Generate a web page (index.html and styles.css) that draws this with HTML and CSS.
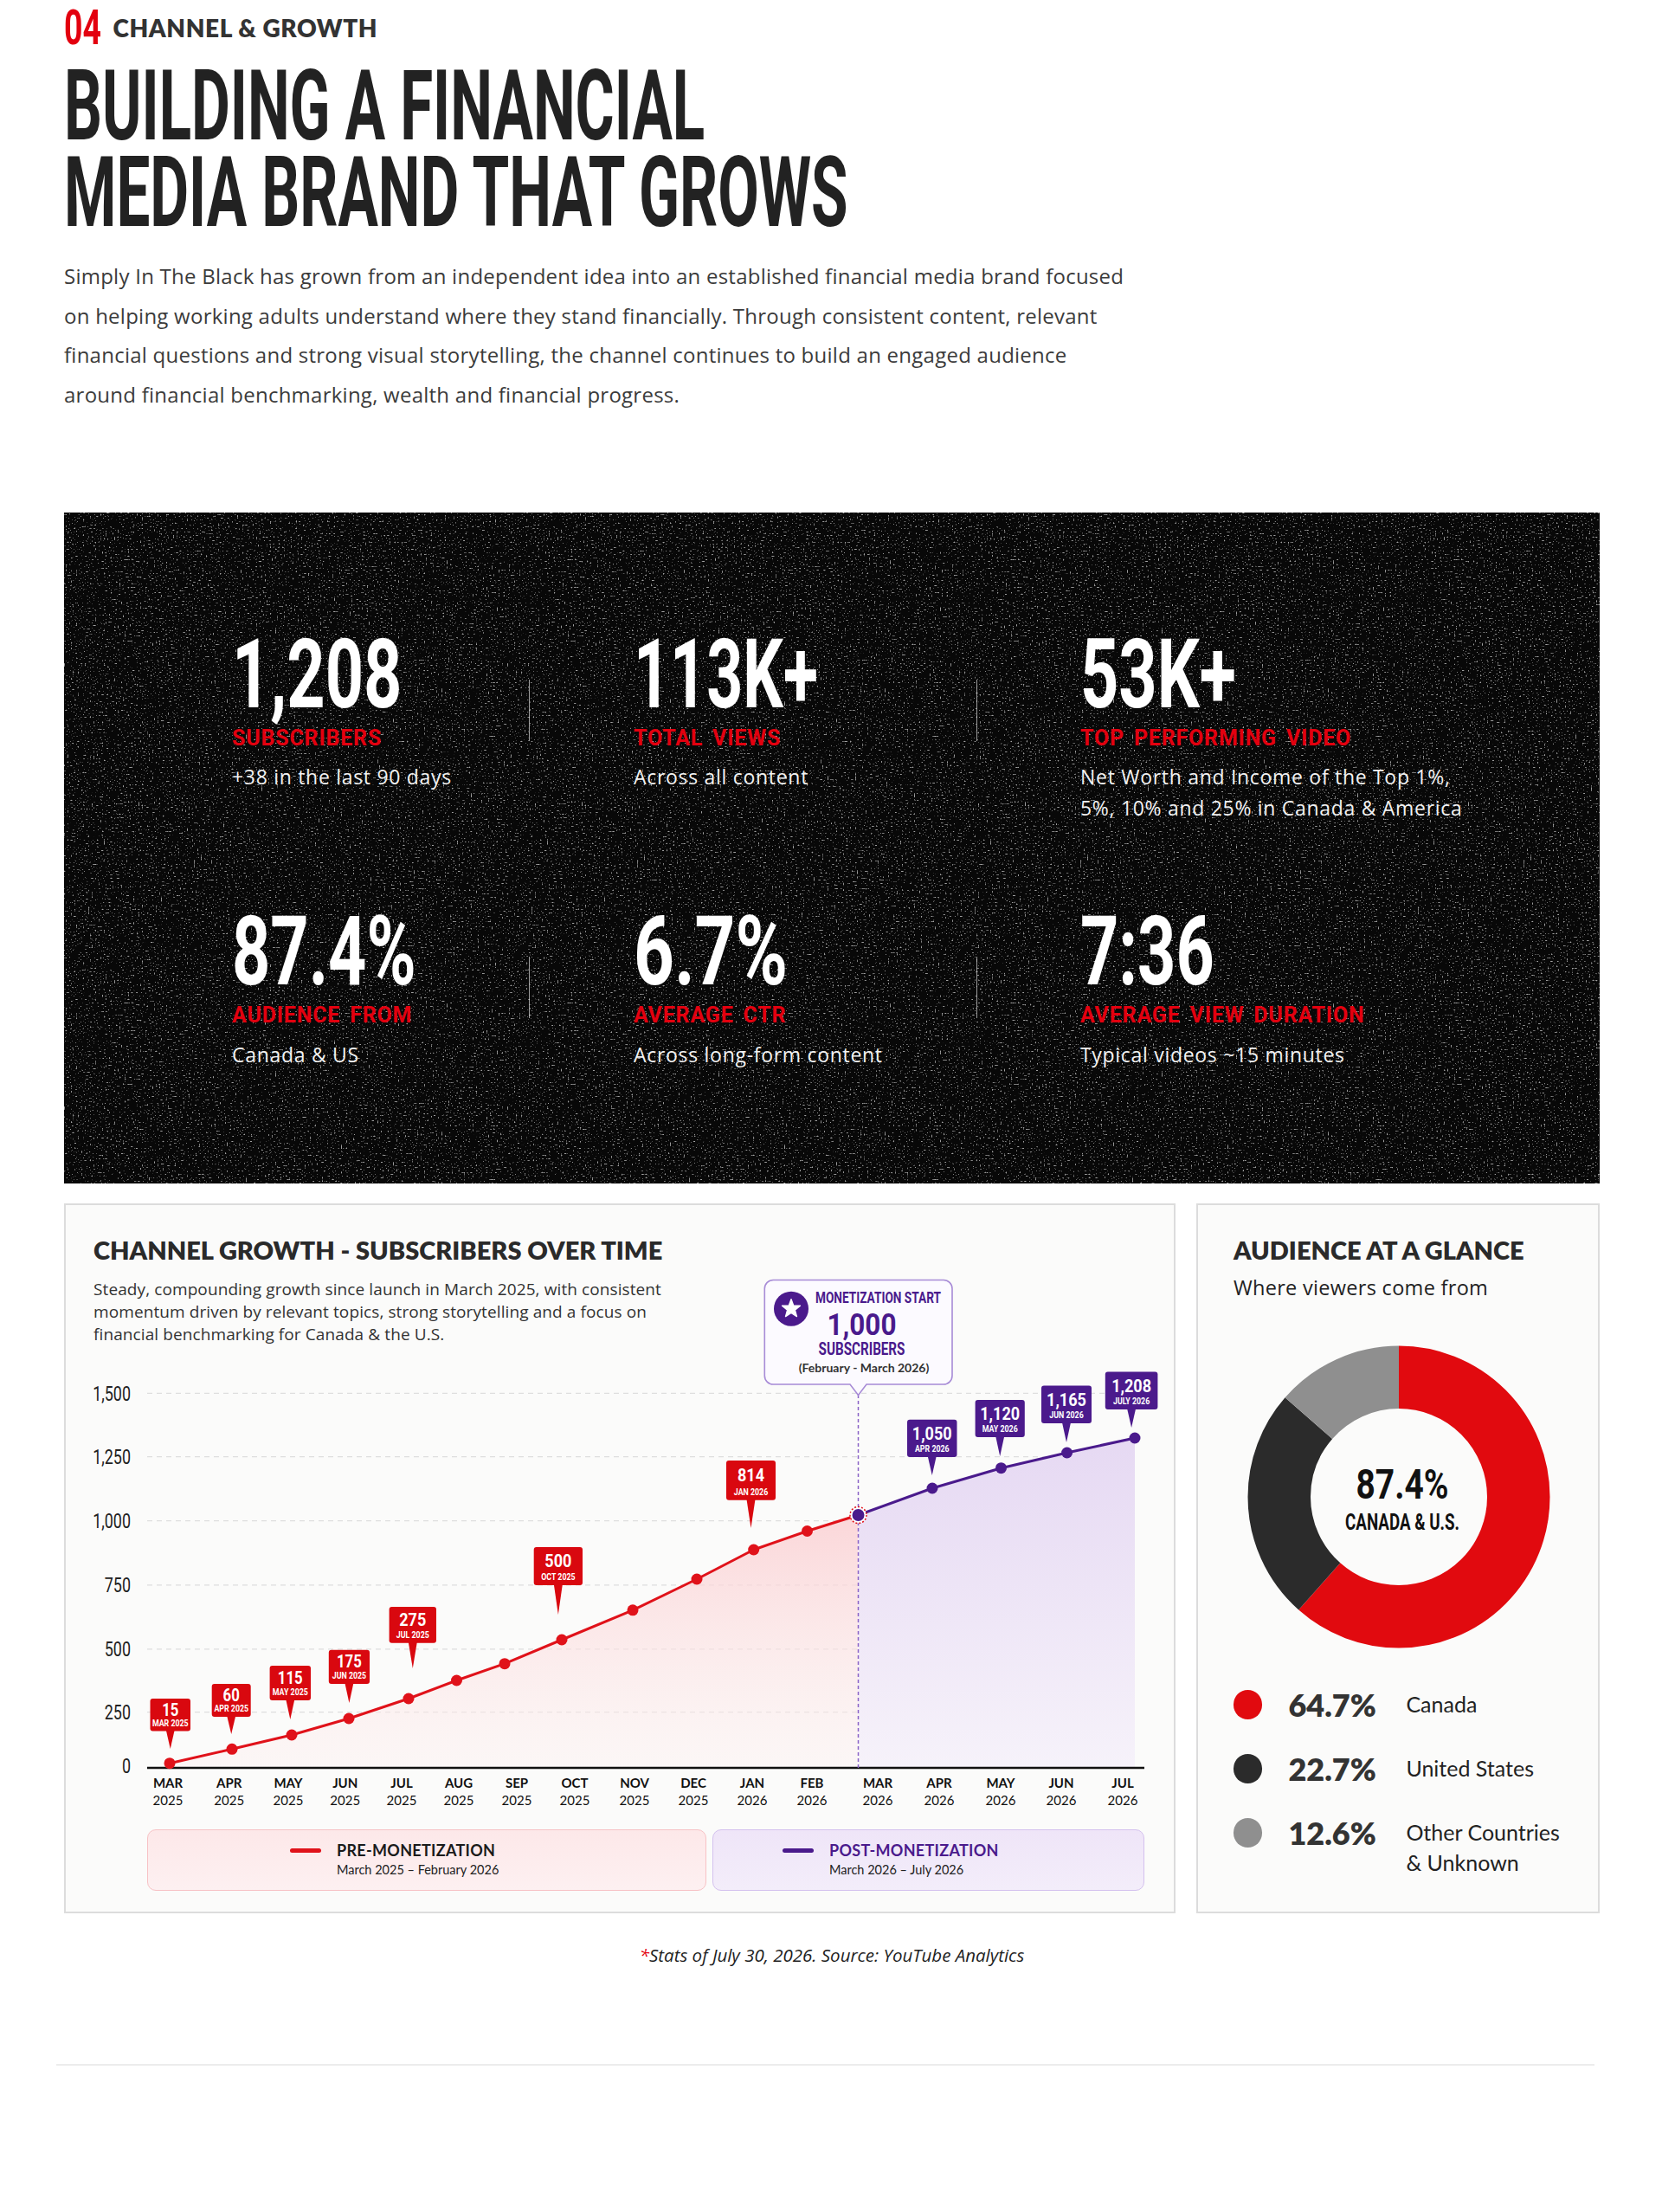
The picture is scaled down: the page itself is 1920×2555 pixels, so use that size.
FILE: index.html
```html
<!DOCTYPE html>
<html lang="en">
<head>
<meta charset="utf-8">
<title>Channel &amp; Growth</title>
<link rel="stylesheet" href="styles.css">
</head>
<body>
<main class="page">
  <header class="intro-block">
    <div class="eyebrow">
      <span class="eyebrow-num">04</span>
      <span class="eyebrow-title">CHANNEL &amp; GROWTH</span>
    </div>
    <h1 class="headline"><span>BUILDING A FINANCIAL</span><span>MEDIA BRAND THAT GROWS</span></h1>
    <p class="intro">Simply In The Black has grown from an independent idea into an established financial media brand focused<br>on helping working adults understand where they stand financially. Through consistent content, relevant<br>financial questions and strong visual storytelling, the channel continues to build an engaged audience<br>around financial benchmarking, wealth and financial progress.</p>
  </header>

  <section class="stats">
    <svg class="grain" preserveAspectRatio="none" aria-hidden="true">
      <filter id="noise" x="0" y="0" width="100%" height="100%">
        <feTurbulence type="fractalNoise" baseFrequency="0.5" numOctaves="1" seed="11"/>
        <feColorMatrix type="matrix" values="0 0 0 0 1  0 0 0 0 1  0 0 0 0 1  9 0 0 0 -5.8"/>
      </filter>
      <rect width="100%" height="100%" fill="#080808"/>
      <rect width="100%" height="100%" filter="url(#noise)" opacity="0.62"/>
    </svg>
    <div class="stats-row">
      <div class="stat stat-a">
        <div class="stat-value">1,208</div>
        <div class="stat-label">SUBSCRIBERS</div>
        <div class="stat-desc">+38 in the last 90 days</div>
      </div>
      <div class="divider gap-a"></div>
      <div class="stat stat-b">
        <div class="stat-value v-narrow">113K+</div>
        <div class="stat-label">TOTAL VIEWS</div>
        <div class="stat-desc">Across all content</div>
      </div>
      <div class="divider gap-b"></div>
      <div class="stat stat-c">
        <div class="stat-value">53K+</div>
        <div class="stat-label">TOP PERFORMING VIDEO</div>
        <div class="stat-desc">Net Worth and Income of the Top 1%,<br>5%, 10% and 25% in Canada &amp; America</div>
      </div>
    </div>
    <div class="stats-row">
      <div class="stat stat-a">
        <div class="stat-value">87.4%</div>
        <div class="stat-label">AUDIENCE FROM</div>
        <div class="stat-desc">Canada &amp; US</div>
      </div>
      <div class="divider gap-a"></div>
      <div class="stat stat-b">
        <div class="stat-value v-wide">6.7%</div>
        <div class="stat-label">AVERAGE CTR</div>
        <div class="stat-desc">Across long-form content</div>
      </div>
      <div class="divider gap-b"></div>
      <div class="stat stat-c">
        <div class="stat-value">7:36</div>
        <div class="stat-label">AVERAGE VIEW DURATION</div>
        <div class="stat-desc">Typical videos ~15 minutes</div>
      </div>
    </div>
  </section>

  <section class="cards">
    <article class="card chart-card">
      <div class="chart-head">
        <h2 class="card-title">CHANNEL GROWTH - SUBSCRIBERS OVER TIME</h2>
        <p class="chart-sub">Steady, compounding growth since launch in March 2025, with consistent<br>momentum driven by relevant topics, strong storytelling and a focus on<br>financial benchmarking for Canada &amp; the U.S.</p>
      </div>
      <svg class="chart" viewBox="76 1560 1280 532" width="1280" height="532">
        <defs>
          <linearGradient id="gRed" x1="0" y1="0" x2="0" y2="1">
            <stop offset="0" stop-color="#fbd0d3" stop-opacity="0.85"/>
            <stop offset="1" stop-color="#fdeeee" stop-opacity="0.35"/>
          </linearGradient>
          <linearGradient id="gPur" x1="0" y1="0" x2="0" y2="1">
            <stop offset="0" stop-color="#e6d9f3"/>
            <stop offset="1" stop-color="#f6f2fa"/>
          </linearGradient>
        </defs>
        <g class="grid">
          <line x1="170" y1="1609.4" x2="1311" y2="1609.4"/>
          <line x1="170" y1="1682.6" x2="1311" y2="1682.6"/>
          <line x1="170" y1="1756.7" x2="1311" y2="1756.7"/>
          <line x1="170" y1="1830.8" x2="1311" y2="1830.8"/>
          <line x1="170" y1="1904.8" x2="1311" y2="1904.8"/>
          <line x1="170" y1="1977.6" x2="1311" y2="1977.6"/>
        </g>
        <polygon fill="url(#gRed)" points="196,2036.7 268,2020.3 337,2004 403,1985 472,1962 527.5,1941 583,1921.7 649,1894 731,1859.8 805,1824 870.7,1790 932.5,1768.5 991.5,1750 991.5,2042 196,2042"/>
        <polygon fill="url(#gPur)" points="991.5,1750 1077,1719 1156.5,1695.7 1232.6,1678 1311,1661 1311,2042 991.5,2042"/>
        <line class="axis" x1="170" y1="2042" x2="1322" y2="2042"/>
        <line class="mline" x1="991.5" y1="1611" x2="991.5" y2="2042"/>
        <polyline class="line-red" points="196,2036.7 268,2020.3 337,2004 403,1985 472,1962 527.5,1941 583,1921.7 649,1894 731,1859.8 805,1824 870.7,1790 932.5,1768.5 991.5,1750"/>
        <polyline class="line-pur" points="991.5,1750 1077,1719 1156.5,1695.7 1232.6,1678 1311,1661"/>
        <g class="dots-red">
          <circle cx="196" cy="2036.7" r="6.5"/><circle cx="268" cy="2020.3" r="6.5"/><circle cx="337" cy="2004" r="6.5"/>
          <circle cx="403" cy="1985" r="6.5"/><circle cx="472" cy="1962" r="6.5"/><circle cx="527.5" cy="1941" r="6.5"/>
          <circle cx="583" cy="1921.7" r="6.5"/><circle cx="649" cy="1894" r="6.5"/><circle cx="731" cy="1859.8" r="6.5"/>
          <circle cx="805" cy="1824" r="6.5"/><circle cx="870.7" cy="1790" r="6.5"/><circle cx="932.5" cy="1768.5" r="6.5"/>
        </g>
        <g class="dots-pur">
          <circle cx="1077" cy="1719" r="6.5"/><circle cx="1156.5" cy="1695.7" r="6.5"/>
          <circle cx="1232.6" cy="1678" r="6.5"/><circle cx="1311" cy="1661" r="6.5"/>
        </g>
        <circle class="junction-ring" cx="991.5" cy="1750" r="9.5"/>
        <circle class="junction-dot" cx="991.5" cy="1750" r="7"/>

        <g class="tag red">
          <rect x="173.5" y="1962" width="46.5" height="37.5" rx="3"/><polygon points="191.75,1998 201.75,1998 196.75,2020"/>
          <text class="tv sm" x="196.75" y="1981.9">15</text><text class="td" x="196.75" y="1994">MAR 2025</text>
        </g>
        <g class="tag red">
          <rect x="244.7" y="1945" width="45" height="38" rx="3"/><polygon points="262.2,1982 272.2,1982 267.2,2003"/>
          <text class="tv sm" x="267.2" y="1965.1">60</text><text class="td" x="267.2" y="1977.5">APR 2025</text>
        </g>
        <g class="tag red">
          <rect x="311.6" y="1924" width="47.4" height="40" rx="3"/><polygon points="330.3,1963 340.3,1963 335.3,1986"/>
          <text class="tv sm" x="335.3" y="1945.2">115</text><text class="td" x="335.3" y="1958.5">MAY 2025</text>
        </g>
        <g class="tag red">
          <rect x="379.8" y="1905.7" width="47.2" height="39.3" rx="3"/><polygon points="398.4,1944 408.4,1944 403.4,1967"/>
          <text class="tv sm" x="403.4" y="1926.5">175</text><text class="td" x="403.4" y="1939.5">JUN 2025</text>
        </g>
        <g class="tag red">
          <rect x="449.6" y="1856" width="54.4" height="41.7" rx="3"/><polygon points="471.8,1896.7 481.8,1896.7 476.8,1927"/>
          <text class="tv" x="476.8" y="1878.1">275</text><text class="td" x="476.8" y="1892.2">JUL 2025</text>
        </g>
        <g class="tag red">
          <rect x="616.7" y="1787" width="56.3" height="44" rx="3"/><polygon points="639.85,1830 649.85,1830 644.85,1865"/>
          <text class="tv" x="644.85" y="1810.3">500</text><text class="td" x="644.85" y="1825.5">OCT 2025</text>
        </g>
        <g class="tag red">
          <rect x="839" y="1687" width="57" height="45.7" rx="3"/><polygon points="862.5,1731.7 872.5,1731.7 867.5,1765"/>
          <text class="tv" x="867.5" y="1711.2">814</text><text class="td" x="867.5" y="1727.2">JAN 2026</text>
        </g>
        <g class="tag pur">
          <rect x="1048" y="1639.7" width="57.5" height="43.3" rx="3"/><polygon points="1071.75,1682 1081.75,1682 1076.75,1704"/>
          <text class="tv" x="1076.75" y="1662.6">1,050</text><text class="td" x="1076.75" y="1677.5">APR 2026</text>
        </g>
        <g class="tag pur">
          <rect x="1126.6" y="1617" width="57.2" height="43" rx="3"/><polygon points="1150.2,1659 1160.2,1659 1155.2,1682"/>
          <text class="tv" x="1155.2" y="1639.8">1,120</text><text class="td" x="1155.2" y="1654.5">MAY 2026</text>
        </g>
        <g class="tag pur">
          <rect x="1203" y="1600.5" width="58" height="43.5" rx="3"/><polygon points="1227,1643 1237,1643 1232,1666"/>
          <text class="tv" x="1232" y="1623.6">1,165</text><text class="td" x="1232" y="1638.5">JUN 2026</text>
        </g>
        <g class="tag pur">
          <rect x="1276.8" y="1584.5" width="60.6" height="43.5" rx="3"/><polygon points="1302.1,1627 1312.1,1627 1307.1,1649"/>
          <text class="tv" x="1307.1" y="1607.6">1,208</text><text class="td" x="1307.1" y="1622.5">JULY 2026</text>
        </g>

        <g class="callout">
          <path class="callout-box" d="M893.3,1478.5 H1090 A10,10 0 0 1 1100,1488.5 V1589 A10,10 0 0 1 1090,1599 H1001 L991.5,1611.5 L982,1599 H893.3 A10,10 0 0 1 883.3,1589 V1488.5 A10,10 0 0 1 893.3,1478.5 Z"/>
          <circle class="star-bg" cx="914" cy="1511.7" r="20"/>
          <path class="star" d="M914,1500.7 L916.7,1507.98 L924.46,1508.3 L918.37,1513.12 L920.47,1520.6 L914,1516.3 L907.53,1520.6 L909.63,1513.12 L903.54,1508.3 L911.3,1507.98 Z"/>
          <text class="mz-h" x="942" y="1505.4">MONETIZATION START</text>
          <text class="mz-n" x="995.5" y="1542">1,000</text>
          <text class="mz-s" x="995.5" y="1565">SUBSCRIBERS</text>
          <text class="mz-d" x="998" y="1585">(February - March 2026)</text>
        </g>

        <g class="ylabels">
          <text x="151" y="1617.6">1,500</text>
          <text x="151" y="1690.8">1,250</text>
          <text x="151" y="1764.9">1,000</text>
          <text x="151" y="1839">750</text>
          <text x="151" y="1913">500</text>
          <text x="151" y="1985.8">250</text>
          <text x="151" y="2048.2">0</text>
        </g>
        <g class="xlabels">
          <text class="xm" x="194" y="2065.4">MAR</text><text class="xy" x="194" y="2085.4">2025</text>
          <text class="xm" x="264.7" y="2065.4">APR</text><text class="xy" x="264.7" y="2085.4">2025</text>
          <text class="xm" x="333" y="2065.4">MAY</text><text class="xy" x="333" y="2085.4">2025</text>
          <text class="xm" x="398.7" y="2065.4">JUN</text><text class="xy" x="398.7" y="2085.4">2025</text>
          <text class="xm" x="464" y="2065.4">JUL</text><text class="xy" x="464" y="2085.4">2025</text>
          <text class="xm" x="530" y="2065.4">AUG</text><text class="xy" x="530" y="2085.4">2025</text>
          <text class="xm" x="597" y="2065.4">SEP</text><text class="xy" x="597" y="2085.4">2025</text>
          <text class="xm" x="664" y="2065.4">OCT</text><text class="xy" x="664" y="2085.4">2025</text>
          <text class="xm" x="733" y="2065.4">NOV</text><text class="xy" x="733" y="2085.4">2025</text>
          <text class="xm" x="801" y="2065.4">DEC</text><text class="xy" x="801" y="2085.4">2025</text>
          <text class="xm" x="869" y="2065.4">JAN</text><text class="xy" x="869" y="2085.4">2026</text>
          <text class="xm" x="938" y="2065.4">FEB</text><text class="xy" x="938" y="2085.4">2026</text>
          <text class="xm" x="1014" y="2065.4">MAR</text><text class="xy" x="1014" y="2085.4">2026</text>
          <text class="xm" x="1085" y="2065.4">APR</text><text class="xy" x="1085" y="2085.4">2026</text>
          <text class="xm" x="1156" y="2065.4">MAY</text><text class="xy" x="1156" y="2085.4">2026</text>
          <text class="xm" x="1226" y="2065.4">JUN</text><text class="xy" x="1226" y="2085.4">2026</text>
          <text class="xm" x="1297" y="2065.4">JUL</text><text class="xy" x="1297" y="2085.4">2026</text>
        </g>
      </svg>
      <div class="legend">
        <div class="legend-box pre">
          <span class="swatch swatch-red"></span>
          <div>
            <div class="legend-title">PRE-MONETIZATION</div>
            <div class="legend-dates">March 2025 – February 2026</div>
          </div>
        </div>
        <div class="legend-box post">
          <span class="swatch swatch-pur"></span>
          <div>
            <div class="legend-title legend-title-pur">POST-MONETIZATION</div>
            <div class="legend-dates">March 2026 – July 2026</div>
          </div>
        </div>
      </div>
    </article>

    <article class="card audience-card">
      <h2 class="card-title">AUDIENCE AT A GLANCE</h2>
      <p class="aud-sub">Where viewers come from</p>
      <svg class="donut" viewBox="0 0 360 360" width="360" height="360">
        <g transform="rotate(-90 180 180)">
          <circle class="seg seg-red" cx="180" cy="180" r="138.25" stroke-dasharray="534.4 868.65"/>
          <circle class="seg seg-dark" cx="180" cy="180" r="138.25" stroke-dasharray="216 868.65" stroke-dashoffset="-534.4"/>
          <circle class="seg seg-gray" cx="180" cy="180" r="138.25" stroke-dasharray="118.3 868.65" stroke-dashoffset="-750.4"/>
        </g>
        <text class="donut-num" x="184" y="182">87.4%</text>
        <text class="donut-cap" x="184" y="217.7">CANADA &amp; U.S.</text>
      </svg>
      <ul class="aud-legend">
        <li class="aud-row"><span class="dot dot-red"></span><span class="pct">64.7%</span><span class="aud-label">Canada</span></li>
        <li class="aud-row"><span class="dot dot-dark"></span><span class="pct">22.7%</span><span class="aud-label">United States</span></li>
        <li class="aud-row"><span class="dot dot-gray"></span><span class="pct">12.6%</span><span class="aud-label">Other Countries<br>&amp; Unknown</span></li>
      </ul>
    </article>
  </section>

  <p class="note"><span class="ast">*</span>Stats of July 30, 2026. Source: YouTube Analytics</p>
  <div class="rule"></div>
</main>
</body>
</html>
```

FILE: styles.css
```css
html, body {
  margin: 0;
  padding: 0;
  background: #ffffff;
}

body {
  font-family: "Open Sans", Lato, sans-serif;
  color: #222;
}

.page {
  width: 1920px;
  box-sizing: border-box;
  padding: 0 72px 0 74px;
}

/* ---------- header ---------- */
.eyebrow {
  display: flex;
  align-items: center;
  padding-top: 4.5px;
  height: 55px;
}

.eyebrow-num {
  display: inline-block;
  width: 56.5px;
  font: 700 55px/55px Roboto, sans-serif;
  color: #e3000f;
  white-space: nowrap;
  transform: scaleX(0.68);
  transform-origin: left center;
}

.eyebrow-title {
  font: 800 28px/28px Lato, sans-serif;
  letter-spacing: 0.6px;
  color: #333;
}

.headline {
  margin: 12.6px 0 0;
  font: 700 114px/100px Roboto, sans-serif;
  color: #222;
}

.headline span {
  display: block;
  white-space: nowrap;
  transform: scaleX(0.605);
  transform-origin: left center;
}

.intro {
  margin: 24.3px 0 0;
  font: 400 24px/45.4px "Open Sans", sans-serif;
  letter-spacing: 0.25px;
  color: #3b3b3b;
}

/* ---------- stats panel ---------- */
.stats {
  position: relative;
  margin-top: 114px;
  width: 1774px;
  height: 775px;
  box-sizing: border-box;
  padding: 131px 0 0 194px;
  background: #080808;
  overflow: hidden;
}

.grain {
  position: absolute;
  left: 0;
  top: 0;
  width: 100%;
  height: 100%;
}

.stats-row {
  position: relative;
  display: flex;
  height: 320.4px;
}

.stat-a { width: 343px; }
.stat-b { width: 396px; }
.stat-c { flex: 1; }

.divider {
  width: 1px;
  height: 71px;
  margin-top: 62px;
  background: rgba(255, 255, 255, 0.6);
}

.gap-a { margin-right: 120px; }
.gap-b { margin-right: 119px; }

.stat-value {
  font: 700 112px/112px Roboto, sans-serif;
  color: #ffffff;
  white-space: nowrap;
  transform: scaleX(0.69);
  transform-origin: left center;
}
.stat-value.v-narrow { transform: scaleX(0.655); }
.stat-value.v-wide { transform: scaleX(0.73); }

.stat-label {
  margin-top: 4.7px;
  font: 700 25px/25px Roboto, sans-serif;
  letter-spacing: 0.8px;
  word-spacing: 4px;
  color: #e3000f;
  white-space: nowrap;
}

.stat-desc {
  margin-top: 14.7px;
  font: 400 23px/36px "Open Sans", sans-serif;
  letter-spacing: 0.7px;
  color: #f2f2f2;
  white-space: nowrap;
}

/* ---------- cards ---------- */
.cards {
  display: flex;
  gap: 24px;
  margin-top: 23px;
}

.card {
  box-sizing: border-box;
  border: 2px solid #dcdcdc;
  background: #fbfbfa;
}

.chart-card { width: 1284px; }

.chart-head { padding: 35px 0 0 32px; }

.card-title {
  margin: 0;
  font: 800 29px/34.8px Lato, sans-serif;
  color: #2a2a2a;
  white-space: nowrap;
}

.chart-sub {
  margin: 13.8px 0 0;
  font: 400 19px/26px "Open Sans", sans-serif;
  letter-spacing: 0.1px;
  color: #333;
}

.chart {
  display: block;
  margin-top: 6.4px;
  overflow: visible;
}

.grid line {
  stroke: #dedede;
  stroke-width: 1.2;
  stroke-dasharray: 6 5;
}

.axis { stroke: #111; stroke-width: 2.5; }

.mline {
  stroke: #8a63c7;
  stroke-width: 1.5;
  stroke-dasharray: 4 3;
}

.line-red, .line-pur {
  fill: none;
  stroke-width: 3;
  stroke-linejoin: round;
  stroke-linecap: round;
}
.line-red { stroke: #e0121a; }
.line-pur { stroke: #4a1a8c; }

.dots-red circle { fill: #e0121a; }
.dots-pur circle { fill: #4a1a8c; }

.junction-ring {
  fill: #ffffff;
  stroke: #e0121a;
  stroke-width: 1.5;
  stroke-dasharray: 2 2;
}
.junction-dot { fill: #4a1a8c; }

.tag.red rect, .tag.red polygon { fill: #d9080f; }
.tag.pur rect, .tag.pur polygon { fill: #4b1a8c; }

.tv, .td, .mz-h, .mz-n, .mz-s, .donut-num, .donut-cap, .ylabels text {
  transform-box: fill-box;
  transform-origin: center;
}

.tv {
  font: 700 21px Roboto, sans-serif;
  fill: #ffffff;
  text-anchor: middle;
  transform: scaleX(0.86);
}
.tv.sm { font-size: 19.5px; }

.td {
  font: 700 10.5px Roboto, sans-serif;
  fill: #ffffff;
  text-anchor: middle;
  transform: scaleX(0.84);
}

.callout-box {
  fill: #fcfaff;
  stroke: #a78bd6;
  stroke-width: 1.6;
}
.star-bg { fill: #4b1a8c; }
.star {
  fill: #ffffff;
  stroke: #ffffff;
  stroke-width: 1.4;
  stroke-linejoin: round;
}

.mz-h {
  font: 700 17.5px Roboto, sans-serif;
  fill: #4a1a8c;
  transform-origin: left center;
  transform: scaleX(0.78);
}
.mz-n {
  font: 700 35px Roboto, sans-serif;
  fill: #4a1a8c;
  text-anchor: middle;
  transform: scaleX(0.9);
}
.mz-s {
  font: 700 19.5px Roboto, sans-serif;
  fill: #4a1a8c;
  text-anchor: middle;
  transform: scaleX(0.78);
}
.mz-d {
  font: 700 14px Lato, sans-serif;
  fill: #333;
  text-anchor: middle;
}

.ylabels text {
  font: 400 23px Roboto, sans-serif;
  fill: #222;
  text-anchor: end;
  transform-origin: right center;
  transform: scaleX(0.78);
}

.xm {
  font: 700 15px Lato, sans-serif;
  fill: #111;
  text-anchor: middle;
}
.xy {
  font: 400 15px Lato, sans-serif;
  fill: #111;
  text-anchor: middle;
}

.legend {
  display: flex;
  gap: 7px;
  margin: 21px 0 23.7px 94px;
}

.legend-box {
  display: flex;
  align-items: flex-start;
  box-sizing: border-box;
  height: 71.3px;
  padding-top: 11.5px;
  border: 1.5px solid;
  border-radius: 10px;
}

.pre {
  width: 646px;
  padding-left: 164px;
  border-color: #f7c2c5;
  background: linear-gradient(180deg, #fde8e9, #fdf0f1);
}

.post {
  width: 499px;
  padding-left: 80px;
  border-color: #d4c1ee;
  background: linear-gradient(180deg, #efe5f8, #f3edfa);
}

.swatch {
  width: 36px;
  height: 5px;
  border-radius: 3px;
  margin: 9px 18px 0 0;
}
.swatch-red { background: #e0121a; }
.swatch-pur { background: #4a1a8c; }

.legend-title {
  font: 700 18px/22px Lato, sans-serif;
  letter-spacing: 0.3px;
  color: #1a1a1a;
}
.legend-title-pur { color: #4a1a8c; }

.legend-dates {
  margin-top: 2.8px;
  font: 400 14.5px/20px Lato, sans-serif;
  color: #222;
}

/* ---------- audience card ---------- */
.audience-card {
  width: 466px;
  padding: 35px 0 0 41px;
}

.aud-sub {
  margin: 9.7px 0 0;
  font: 400 23.5px/30px "Open Sans", sans-serif;
  letter-spacing: 0.3px;
  color: #222;
}

.donut {
  display: block;
  margin: 47.5px 0 0 10.5px;
}

.seg {
  fill: none;
  stroke-width: 72.5;
}
.seg-red { stroke: #e10a0f; }
.seg-dark { stroke: #2b2b2b; }
.seg-gray { stroke: #8f8f8f; }

.donut-num {
  font: 700 48px Roboto, sans-serif;
  fill: #111;
  text-anchor: middle;
  transform: scaleX(0.81);
}
.donut-cap {
  font: 700 25px Roboto, sans-serif;
  fill: #111;
  text-anchor: middle;
  transform: scaleX(0.75);
}

.aud-legend {
  list-style: none;
  margin: 42px 0 0;
  padding: 0;
  display: flex;
  flex-direction: column;
  gap: 38px;
}

.aud-row {
  display: flex;
  align-items: flex-start;
}

.dot {
  flex: none;
  width: 33.4px;
  height: 33.4px;
  border-radius: 50%;
  margin: 1.3px 30px 0 0;
}
.dot-red { background: #e10a0f; }
.dot-dark { background: #2b2b2b; }
.dot-gray { background: #8f8f8f; }

.pct {
  flex: none;
  width: 136px;
  font: 800 36px/36px Lato, sans-serif;
  color: #333;
}

.aud-label {
  font: 400 25px/35px Lato, sans-serif;
  color: #222;
}

/* ---------- footer ---------- */
.note {
  margin: 33px 0 0;
  text-align: center;
  font: italic 400 20.5px/30px "Open Sans", sans-serif;
  color: #1e1e1e;
}
.note .ast { color: #e3000f; }

.rule {
  margin: 111px 6px 0 -9px;
  height: 2px;
  background: #ececec;
}
```
